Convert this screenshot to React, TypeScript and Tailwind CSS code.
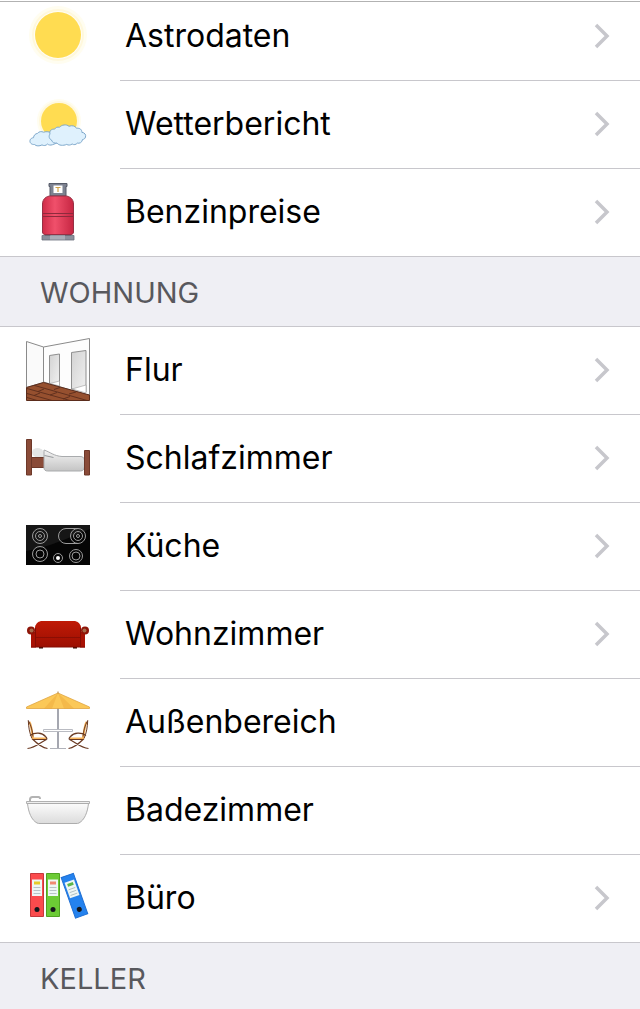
import type { ReactNode } from "react";

type Item = {
  label: string;
  icon: ReactNode;
  href?: string;
};

type Section = {
  title?: string;
  items: Item[];
};

function Icon({ children }: { children: ReactNode }) {
  return (
    <svg viewBox="0 0 64 65" fill="none" aria-hidden="true" className="h-[65px] w-16 shrink-0 overflow-visible">
      {children}
    </svg>
  );
}

function SunIcon() {
  return (
    <Icon>
      <circle cx="32" cy="31" r="29" fill="#fffdf0" />
      <circle cx="32" cy="31" r="26" fill="#fff8dc" />
      <circle cx="32" cy="31" r="24" fill="#fffdf5" />
      <circle cx="32" cy="31" r="23" fill="#ffdc51" />
    </Icon>
  );
}

function WeatherIcon() {
  return (
    <Icon>
      <circle cx="33" cy="29" r="22" fill="#fffdf0" />
      <circle cx="33" cy="29" r="20" fill="#fff8dc" />
      <circle cx="33" cy="29" r="18" fill="#ffdc51" />
      <g fill="#dff1fd" stroke="#7fa9cc" strokeWidth="1">
        <path d="M8.500 52.500c-3 .3-5-1.800-4.500-4 .4-2 2-2.700 3.500-2.800.3-2.500 1.800-4 4-4.300 1.500-2 4-2.200 6-1.200 3-1 6-.5 8 1l5 4v6l-4 1.500c-2 .8-4 .3-5-.7-1.500 1.800-4 1.900-5.500.9-2.500 1.400-5.800 1.400-7.500-.4z" />
        <path d="M31 51c-2.500.6-5-.6-5.500-3-2.500-1-3-4-1.500-6-1-3 1.500-5.300 4.500-4.800 1.300-1.900 3-2.400 5-1.900 2-2.600 7-3.300 9.500-1 3-1.300 6.500-.3 7.500 2 3.500-.5 5.600 1.500 5.300 4 3.200.4 4.300 2.600 3.700 4.700-.4 1.600-1.600 2.400-3 2.500-.3 3-3 4.200-5.300 3.600-1 1.600-3.500 2-5 .9-2 1.300-4 1.400-5.500.4-3.500 1.500-8 1.200-9.700-1.400z" />
      </g>
    </Icon>
  );
}

function GasBottleIcon() {
  return (
    <Icon>
      <defs>
        <linearGradient id="gas" x1="0" x2="1" y1="0" y2="0">
          <stop offset="0" stopColor="#cf2c48" />
          <stop offset=".4" stopColor="#f0506b" />
          <stop offset="1" stopColor="#c62642" />
        </linearGradient>
      </defs>
      <path d="M23 3.500h18v3h-1v9.500h-16v-9.500h-1z" fill="#7d8290" stroke="#565b68" />
      <path d="M27.500 5.500h9v7.500h-9z" fill="#fff" />
      <path d="M29.500 7.500h5M32 7.500v4.500" stroke="#cfa24a" strokeWidth="1.200" />
      <path d="M19 54h6v2h-6zM39 54h6v2h-6z" fill="#6b2632" />
      <path d="M16.500 24c0-5 4-8 8-8h15c4 0 8 3 8 8v28c0 1.500-1 2.500-2.500 2.500H19c-1.500 0-2.500-1-2.500-2.500z" fill="url(#gas)" stroke="#973044" />
      <path d="M17 33.500h30M17 36.500h30" stroke="#8e2a3d" />
      <path d="M16 55.500h32v4.500H16z" fill="#8b909c" stroke="#6b707c" strokeWidth=".8" />
      <path d="M24 55.500h15v4H24z" fill="#a9adb7" />
    </Icon>
  );
}

function HallIcon() {
  return (
    <Icon>
      <defs>
        <linearGradient id="door" x1="0" x2="1" y1="0" y2="1">
          <stop offset="0" stopColor="#d2d2d2" />
          <stop offset="1" stopColor="#f1f1f1" />
        </linearGradient>
      </defs>
      <path d="M.500 3.500l17 5.500v35.500l-17 5z" fill="#fafafa" stroke="#8a8a8a" />
      <path d="M17.500 9L63.500.500v57l-46-13.500z" fill="#fdfdfd" stroke="#8a8a8a" />
      <path d="M23.500 17.500l10-1.500v31.500l-10-2z" fill="url(#door)" stroke="#8f8f8f" />
      <path d="M45.500 14.500l14.500-2v41.500l-14.500-3z" fill="url(#door)" stroke="#8f8f8f" />
      <path d="M24 45.500l9.500-2.500v5zM46 51l14-4v8z" fill="#fff" stroke="#9a9a9a" strokeWidth=".6" />
      <path d="M.500 49.500l17-5 46 12.500v5.500H.500z" fill="#96502f" stroke="#5b2c1c" />
      <path
        d="M8 47.300l53 15.200M1 50.500l43 12M1 55.500l25 7M1 59.500l10 3M12 53.500l6-2.500M24 57l7-2.500M8 57.500l6-2.500M37 61l7-2.500M28 51.500l6-2M43 56l7-2"
        stroke="#5b2c1c"
        strokeWidth=".9"
      />
    </Icon>
  );
}

function BedIcon() {
  return (
    <Icon>
      <defs>
        <linearGradient id="blanket" x1="0" x2="0" y1="0" y2="1">
          <stop offset="0" stopColor="#f4f4f4" />
          <stop offset="1" stopColor="#c4c4c4" />
        </linearGradient>
      </defs>
      <path d="M5.500 31.500H22v10H5.500z" fill="#8a4b38" stroke="#6d3829" />
      <ellipse cx="11.500" cy="26.500" rx="5.500" ry="4.500" fill="#e4e6e6" />
      <path d="M7 24l8-1 3 3v5H9z" fill="#e4e6e6" />
      <path d="M18 24c6 2 10 6 18 6.500h18c3 0 4.500 1.500 4.500 4v6c0 2.500-1.500 4.500-4 4.500H21.500c-2 0-3.500-1-3.500-3z" fill="url(#blanket)" stroke="#a9abad" />
      <path d="M18.500 29.500l9 2" stroke="#96999c" />
      <path d="M.500 13.500h5v35.500h-5zM58.500 24.500h5v24.500h-5z" fill="#8a4b38" stroke="#6d3829" />
    </Icon>
  );
}

function StoveIcon() {
  return (
    <Icon>
      <path d="M0 11h64v40H0z" fill="#050505" />
      <path d="M0 11h64v4C44 23 24 33 0 37z" fill="#161616" />
      <g stroke="#9b9b9b">
        <circle cx="14" cy="22" r="7.500" />
        <circle cx="14" cy="22" r="4.500" />
        <circle cx="14" cy="22" r="1.500" />
        <path d="M52 14.500H40a7.500 7.500 0 000 15h12" />
        <circle cx="52" cy="22" r="7.500" />
        <circle cx="52" cy="22" r="4.500" />
        <circle cx="52" cy="22" r="1.500" />
        <circle cx="14" cy="40" r="7.500" />
        <circle cx="14" cy="40" r="4" />
        <circle cx="50" cy="42" r="6.500" />
        <circle cx="50" cy="42" r="4" />
        <circle cx="32" cy="44" r="4.500" />
      </g>
      <circle cx="32" cy="44" r="2" fill="#fff" />
    </Icon>
  );
}

function SofaIcon() {
  return (
    <Icon>
      <defs>
        <linearGradient id="sofa" x1="0" x2="0" y1="0" y2="1">
          <stop offset="0" stopColor="#c01a06" />
          <stop offset="1" stopColor="#9c0f02" />
        </linearGradient>
      </defs>
      <path d="M13 44h4v2.500h-4zM47 44h4v2.500h-4z" fill="#2a0a05" />
      <path d="M9 25c1-4 4-6 7-6h32c3 0 6 2 7 6v20H9z" fill="url(#sofa)" />
      <path d="M5 30h5v15.500H5zM54 30h5v15.500h-5z" fill="#a81204" />
      <path d="M10 35.500h44" stroke="#8a0e04" />
      <path d="M9.500 26v19M54.500 26v19" stroke="#850d03" />
      <path d="M5 45h54" stroke="#850d03" />
      <circle cx="5" cy="28.500" r="4" fill="#8e1508" />
      <circle cx="5.500" cy="28.500" r="2" fill="#a46a4b" />
      <circle cx="59" cy="28.500" r="4" fill="#8e1508" />
      <circle cx="58.500" cy="28.500" r="2" fill="#a46a4b" />
    </Icon>
  );
}

function GardenChair() {
  return (
    <>
      <path d="M3.500 32c2 4 2.500 10 3.500 16.500h13" stroke="#f7b45c" strokeWidth="2.200" />
      <path d="M2.300 30.500C2.500 37 3.500 43 6 48.500M2.300 30.500c3 5 4 10 4.700 16" stroke="#6a3a22" />
      <path d="M4 45.500c5-3.500 12-3 15.500 1 2 2 1.500 3 .5 3H7c4 4 8 8 14.500 9M20.500 49.500C15 52 9 58 1.500 58.500" stroke="#6a3a22" strokeWidth="1.200" />
    </>
  );
}

function TerraceIcon() {
  return (
    <Icon>
      <path d="M31 18h2v40h-2z" fill="#a5a7b0" />
      <path d="M32 3L.500 17v1.500h63V17z" fill="#fbc858" />
      <path d="M32 3L18 18.500h8zM32 3l6 15.500h10z" fill="#f4b94a" />
      <path d="M32 3L.500 17v1.500h63V17z" stroke="#e0a540" strokeWidth=".8" />
      <path d="M32 1.500v2" stroke="#b08040" />
      <path d="M17.500 39.500h29v2h-29z" fill="#fff" stroke="#b9bbc2" />
      <path d="M24 58.500h16" stroke="#b0b2ba" />
      <GardenChair />
      <g transform="matrix(-1 0 0 1 64 0)">
        <GardenChair />
      </g>
    </Icon>
  );
}

function BathIcon() {
  return (
    <Icon>
      <defs>
        <linearGradient id="tub" x1="0" x2="0" y1="0" y2="1">
          <stop offset="0" stopColor="#fbfbfb" />
          <stop offset="1" stopColor="#dcdcdc" />
        </linearGradient>
      </defs>
      <path d="M4 23v-1.500c0-1.500 1-2.500 2.500-2.500h6c1 0 1.500.5 1.500 2" stroke="#b3b3b3" strokeWidth="2" />
      <path d="M1.500 25.500c1 9 4 16.500 9.500 19.500 1 .5 2 .5 3 .5h36c1 0 2 0 3-.5 5.500-3 8.500-10.500 9.500-19.500z" fill="url(#tub)" stroke="#adadad" />
      <path d="M.500 23.500h63v2H.500z" fill="#efefef" stroke="#a8a8a8" strokeWidth=".9" />
    </Icon>
  );
}

function Binder({ fill, edge, tag }: { fill: string; edge: string; tag: string }) {
  return (
    <>
      <path d="M.500.500h13v43H.500z" fill={fill} stroke={edge} />
      <path d="M2 6.500h10V23H2z" fill="#eef6f5" />
      <path d="M4 8.500h6v3H4z" fill={tag} />
      <path d="M3.500 14.500h7M3.500 17.500h7M3.500 20.500h7" stroke="#a9b8bb" strokeWidth=".8" />
      <circle cx="7" cy="36.500" r="2.500" fill="#15171c" />
    </>
  );
}

function OfficeIcon() {
  return (
    <Icon>
      <g transform="translate(4 7)">
        <Binder fill="#fb4b4d" edge="#c5383c" tag="#e6cc2a" />
      </g>
      <g transform="translate(20 7)">
        <Binder fill="#6ccb35" edge="#50a322" tag="#f08a72" />
      </g>
      <g transform="translate(34.500 11.300) rotate(-19.500)">
        <Binder fill="#2482ee" edge="#2070d4" tag="#5bb54a" />
      </g>
    </Icon>
  );
}

function Chevron() {
  return (
    <svg viewBox="0 0 16 26" fill="none" aria-hidden="true" className="h-[26px] w-4 shrink-0">
      <path d="M2 2l11 11L2 24" stroke="#c7c7cc" strokeWidth="3.500" />
    </svg>
  );
}

const sections: Section[] = [
  {
    items: [
      { label: "Astrodaten", icon: <SunIcon />, href: "#astrodaten" },
      { label: "Wetterbericht", icon: <WeatherIcon />, href: "#wetterbericht" },
      { label: "Benzinpreise", icon: <GasBottleIcon />, href: "#benzinpreise" },
    ],
  },
  {
    title: "WOHNUNG",
    items: [
      { label: "Flur", icon: <HallIcon />, href: "#flur" },
      { label: "Schlafzimmer", icon: <BedIcon />, href: "#schlafzimmer" },
      { label: "Küche", icon: <StoveIcon />, href: "#kueche" },
      { label: "Wohnzimmer", icon: <SofaIcon />, href: "#wohnzimmer" },
      { label: "Außenbereich", icon: <TerraceIcon /> },
      { label: "Badezimmer", icon: <BathIcon /> },
      { label: "Büro", icon: <OfficeIcon />, href: "#buero" },
    ],
  },
  { title: "KELLER", items: [] },
];

function Row({ item }: { item: Item }) {
  const content = (
    <>
      <div className="flex w-[120px] shrink-0 items-center pb-px pl-[26px]">{item.icon}</div>
      <div className="flex flex-1 items-center justify-between border-b border-[#c8c7cc] pr-[30px] pb-px pl-[5px] group-last:border-b-0">
        <span className="text-[32px] leading-10">{item.label}</span>
        {item.href && <Chevron />}
      </div>
    </>
  );

  return (
    <li className="group h-[88px] last:h-[87px]">
      {item.href ? (
        <a href={item.href} className="flex h-full">
          {content}
        </a>
      ) : (
        <div className="flex h-full">{content}</div>
      )}
    </li>
  );
}

export default function App() {
  return (
    <div className="flex h-screen flex-col overflow-hidden bg-white font-['Inter',sans-serif] text-black">
      {/* Lower edge of the navigation bar */}
      <div className="h-0.5 shrink-0 border-b border-[#b2b2b2]" />

      <main className="min-h-0 flex-1 overflow-hidden">
        {/* List is scrolled slightly under the bar */}
        <div className="-mt-[9px]">
          {sections.map((section, index) => (
            <section key={index}>
              {section.title && (
                <h2 className="flex h-[71px] items-center border-y border-[#c8c7cc] bg-[#efeff4] px-10 pt-0.5 text-[29px] leading-9 text-[#58585d]">
                  {section.title}
                </h2>
              )}
              <ul>
                {section.items.map((item) => (
                  <Row key={item.label} item={item} />
                ))}
              </ul>
            </section>
          ))}
        </div>
      </main>
    </div>
  );
}
